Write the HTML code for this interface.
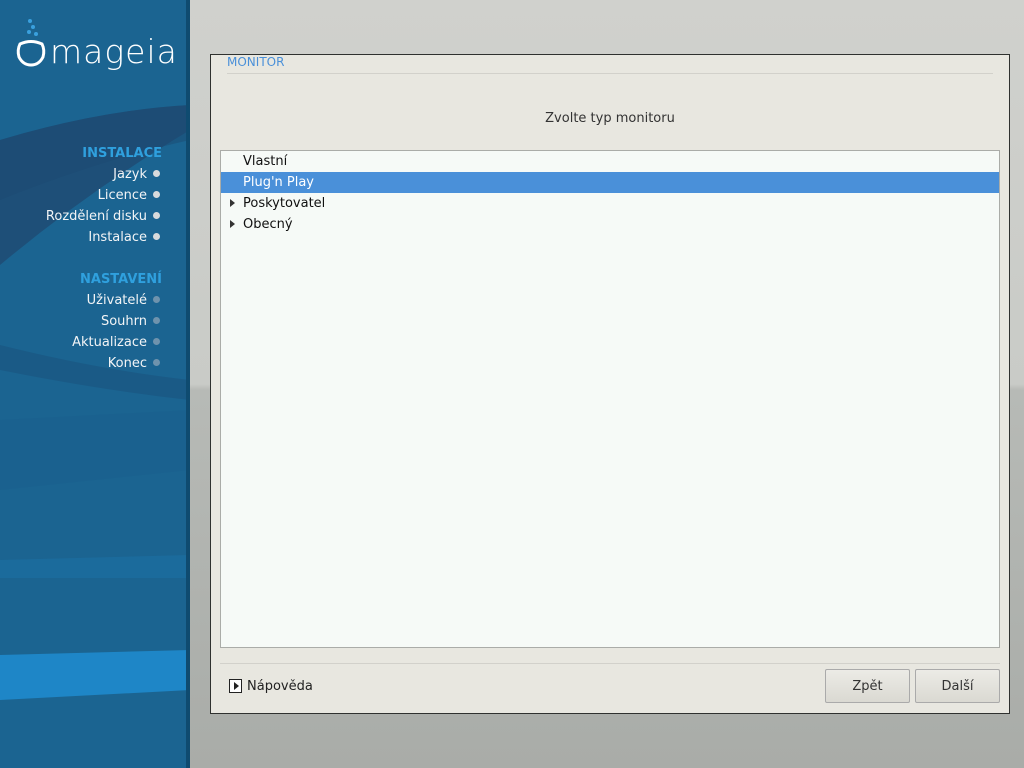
<!DOCTYPE html>
<html><head><meta charset="utf-8"><style>
*{margin:0;padding:0;box-sizing:border-box}
body{width:1024px;height:768px;overflow:hidden;position:relative;font-family:"DejaVu Sans","Liberation Sans",sans-serif;font-size:13px;background:linear-gradient(#d0d1cd 0,#c9cbc7 384px,#b7bab6 390px,#a9aca8 768px)}
#side{position:absolute;left:0;top:0;width:190px;height:768px;background:#1b6491;overflow:hidden}
#side .edge{position:absolute;right:0;top:0;width:4px;height:768px;background:#0f4b70}
.it{position:absolute;right:43px;color:#f2f4f6;text-align:right;white-space:nowrap}
.dot{position:absolute;left:153px;width:7px;height:7px;border-radius:50%;background:#d8dadc}
.dot.d{background:#6f93ad}
.hd{position:absolute;right:28px;color:#2fa0de;font-weight:bold;font-size:13px}
#dlg{position:absolute;left:210px;top:54px;width:800px;height:660px;background:#e8e7e0;border:1px solid #2f312f}
.btn{position:absolute;top:669px;width:85px;height:34px;border:1px solid #aaa;border-radius:2px;background:linear-gradient(#ecebe6,#dad9d2);text-align:center;line-height:34px;color:#333}
</style></head><body>
<div id="side">
<svg width="190" height="768" style="position:absolute;left:0;top:0">
<path d="M0 140 Q100 110 190 105 L190 130 Q90 190 0 265 Z" fill="#1e4f78"/>
<path d="M0 140 Q100 110 190 105 L190 140 Q100 160 0 200 Z" fill="#1c4a72" opacity=".5"/>
<path d="M0 345 Q100 370 190 380 L190 400 Q100 390 0 370 Z" fill="#1a5a86"/>
<path d="M0 420 L190 410 L190 470 L0 490 Z" fill="#1a5f8e" opacity=".6"/>
<path d="M0 560 L190 555 L190 578 L0 578 Z" fill="#1d6fa3" opacity=".6"/>
<path d="M0 655 L190 650 L190 690 L0 700 Z" fill="#1e86c7"/>
<path d="M20 44 Q31 39 42 44 Q45 50 43 57 Q39 65 31 65 Q23 65 19 57 Q17 50 20 44 Z" fill="none" stroke="#fff" stroke-width="3"/>
<circle cx="30" cy="21" r="2" fill="#3aa0de"/><circle cx="33" cy="27" r="2" fill="#3aa0de"/><circle cx="29" cy="32" r="2" fill="#3aa0de"/><circle cx="36" cy="34" r="2" fill="#3aa0de"/>
<text x="50" y="63" fill="#fff" font-size="33" font-family="DejaVu Sans" font-weight="300" letter-spacing="1">mageia</text>
</svg>
<div class="edge"></div>
<div class="hd" style="top:146px">INSTALACE</div>
<div class="it" style="top:167px">Jazyk</div><div class="dot" style="top:170px"></div>
<div class="it" style="top:188px">Licence</div><div class="dot" style="top:191px"></div>
<div class="it" style="top:209px">Rozdělení disku</div><div class="dot" style="top:212px"></div>
<div class="it" style="top:230px">Instalace</div><div class="dot" style="top:233px"></div>
<div class="hd" style="top:272px">NASTAVENÍ</div>
<div class="it" style="top:293px">Uživatelé</div><div class="dot d" style="top:296px"></div>
<div class="it" style="top:314px">Souhrn</div><div class="dot d" style="top:317px"></div>
<div class="it" style="top:335px">Aktualizace</div><div class="dot d" style="top:338px"></div>
<div class="it" style="top:356px">Konec</div><div class="dot d" style="top:359px"></div>
</div>
<div id="dlg"></div>
<div style="position:absolute;left:227px;top:55px;color:#4a90d9;font-size:12px">MONITOR</div>
<div style="position:absolute;left:227px;top:73px;width:766px;height:1px;background:#d2d1cb"></div>
<div style="position:absolute;left:210px;width:800px;top:111px;text-align:center;color:#333">Zvolte typ monitoru</div>
<div style="position:absolute;left:220px;top:150px;width:780px;height:498px;background:#f6faf7;border:1px solid #aaaca8">
<div style="position:absolute;left:22px;top:3px;color:#111">Vlastní</div>
<div style="position:absolute;left:0;top:21px;width:778px;height:21px;background:#4a90d9"></div>
<div style="position:absolute;left:22px;top:24px;color:#fff">Plug'n Play</div>
<div style="position:absolute;left:9px;top:48px;border-left:5px solid #333;border-top:4px solid transparent;border-bottom:4px solid transparent"></div>
<div style="position:absolute;left:22px;top:45px;color:#111">Poskytovatel</div>
<div style="position:absolute;left:9px;top:69px;border-left:5px solid #333;border-top:4px solid transparent;border-bottom:4px solid transparent"></div>
<div style="position:absolute;left:22px;top:66px;color:#111">Obecný</div>
</div>
<div style="position:absolute;left:220px;top:663px;width:780px;height:1px;background:#d2d1cb"></div>
<div style="position:absolute;left:229px;top:679px;width:13px;height:14px;border:1px solid #222;background:#fff"></div>
<div style="position:absolute;left:234px;top:682px;border-left:5px solid #222;border-top:4px solid transparent;border-bottom:4px solid transparent"></div>
<div style="position:absolute;left:247px;top:679px;color:#222">Nápověda</div>
<div class="btn" style="left:825px">Zpět</div>
<div class="btn" style="left:915px">Další</div>
</body></html>
